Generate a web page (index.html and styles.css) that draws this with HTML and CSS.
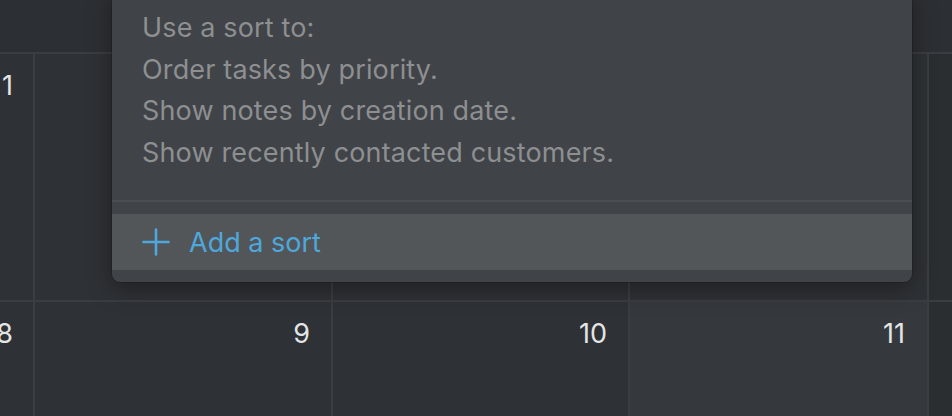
FILE: index.html
```html
<!DOCTYPE html>
<html>
<head>
<meta charset="utf-8">
<link rel="stylesheet" href="styles.css">
</head>
<body>
<div class="calendar">
  <div class="header-row"></div>
  <div class="week">
    <div class="cell cell-edge"><span class="num">1</span></div>
    <div class="cell cell-a"></div>
    <div class="cell cell-b"></div>
    <div class="cell cell-c"></div>
    <div class="cell cell-rest"></div>
  </div>
  <div class="week week-last">
    <div class="cell cell-edge"><span class="num">8</span></div>
    <div class="cell cell-a"><span class="num">9</span></div>
    <div class="cell cell-b"><span class="num">10</span></div>
    <div class="cell cell-c cell-light"><span class="num">11</span></div>
    <div class="cell cell-rest"></div>
  </div>
</div>

<div class="popup">
  <div class="help">
    <p class="help-line">Use a sort to:</p>
    <p class="help-line">Order tasks by priority.</p>
    <p class="help-line">Show notes by creation date.</p>
    <p class="help-line">Show recently contacted customers.</p>
  </div>
  <div class="divider"></div>
  <div class="add-row">
    <svg class="plus" width="28" height="28" viewBox="0 0 28 28" aria-hidden="true">
      <path d="M14 1.5V26.5M1.5 14H26.5" stroke="currentColor" stroke-width="2.6" stroke-linecap="round" fill="none"/>
    </svg>
    <span class="add-label">Add a sort</span>
  </div>
</div>
</body>
</html>
```

FILE: styles.css
```css
* { box-sizing: border-box; }

html, body {
  margin: 0;
  padding: 0;
}

body {
  width: 952px;
  height: 416px;
  overflow: hidden;
  background: #2c2f33;
  font-family: Inter, "Noto Sans", "Liberation Sans", sans-serif;
  position: relative;
}

.calendar {
  display: flex;
  flex-direction: column;
  height: 416px;
  overflow: hidden;
}

.header-row {
  height: 52px;
  flex: none;
}

.week {
  display: flex;
  height: 248px;
  flex: none;
  border-top: 2px solid #3a3d41;
  margin-left: -67px;
}

.week-last {
  height: 116px;
}

.cell {
  position: relative;
  border-left: 2px solid #3a3d41;
  background: #2e3135;
  padding: 13px 21px 0 0;
  display: flex;
  justify-content: flex-end;
  align-items: flex-start;
}

.cell-edge { width: 100px; border-left: none; padding-right: 20px; }
.cell-a { width: 298px; }
.cell-b { width: 297px; }
.cell-c { width: 299px; padding-right: 22px; }
.cell-rest { flex: 1; background: #2b2e31; }
.cell-light { background: #35383c; }

.num {
  color: #e4e5e6;
  font-size: 27px;
  line-height: 38px;
  font-weight: 400;
}

.popup {
  position: absolute;
  left: 112px;
  top: -12px;
  width: 800px;
  height: 294px;
  background: #404347;
  border-radius: 8px;
  box-shadow: 0 6px 24px rgba(0, 0, 0, 0.35), 0 0 0 1px rgba(0, 0, 0, 0.15);
  padding-top: 19px;
  display: flex;
  flex-direction: column;
}

.help {
  padding-left: 30px;
}

.help-line {
  margin: 0;
  color: #8d8f91;
  font-size: 27px;
  line-height: 41.5px;
  letter-spacing: 0.15px;
}

.divider {
  margin-top: 27px;
  height: 2px;
  background: #4b4e52;
}

.add-row {
  margin-top: 12px;
  height: 56px;
  background: #535659;
  display: flex;
  align-items: center;
  padding-left: 30px;
  gap: 19px;
  color: #4ea8dd;
}

.plus { display: block; }

.add-label {
  font-size: 27px;
  color: #4ea8dd;
}
```
